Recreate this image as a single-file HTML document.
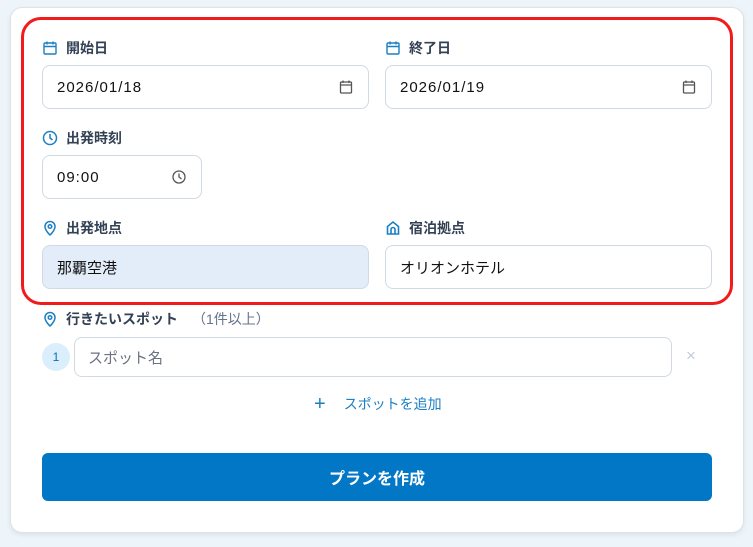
<!DOCTYPE html>
<html><head><meta charset="utf-8"><style>
*{box-sizing:border-box;margin:0;padding:0}
body{width:753px;height:547px;background:#eef5fa;font-family:"Liberation Sans","Noto Sans CJK JP",sans-serif;position:relative;overflow:hidden;color:#1f2937}
.card{position:absolute;left:10px;top:7px;width:734px;height:526px;background:#fff;border:1px solid #dbe3ea;border-radius:12px;box-shadow:0 2px 6px rgba(0,0,0,.08)}
.red{position:absolute;left:21px;top:17px;width:712px;height:288px;border:3.5px solid #f21b1b;border-radius:20px}
.lbl{position:absolute;font-size:14px;font-weight:bold;color:#334155;display:flex;align-items:center;gap:8px;height:20px}
.lbl svg{width:16px;height:16px}
.in{position:absolute;height:44px;border:1px solid #d1d9e2;border-radius:8px;background:#fff;font-size:15px;color:#111;display:flex;align-items:center;padding-left:14px}
.in .ic{position:absolute;right:14px;top:13px}
.ls{letter-spacing:1px}
.blue{background:#e3ecf9}
</style></head><body>
<div class="card"></div>
<div class="red"></div>

<div class="lbl" style="left:42px;top:38px"><svg viewBox="0 0 16 16" fill="none" stroke="#1b7fc4" stroke-width="1.4"><rect x="2" y="3" width="12" height="11" rx="1"/><path d="M2 6.5h12M5 1.5v3M11 1.5v3"/></svg>開始日</div>
<div class="in" style="left:42px;top:65px;width:327px"><span class="ls">2026/01/18</span><svg class="ic" width="16" height="16" viewBox="0 0 16 16" fill="none" stroke="#555" stroke-width="1.3"><rect x="2.5" y="3" width="11" height="11" rx="1"/><path d="M2.5 6h11M5 1.5v2.5M11 1.5v2.5"/></svg></div>

<div class="lbl" style="left:385px;top:38px"><svg viewBox="0 0 16 16" fill="none" stroke="#1b7fc4" stroke-width="1.4"><rect x="2" y="3" width="12" height="11" rx="1"/><path d="M2 6.5h12M5 1.5v3M11 1.5v3"/></svg>終了日</div>
<div class="in" style="left:385px;top:65px;width:327px"><span class="ls">2026/01/19</span><svg class="ic" width="16" height="16" viewBox="0 0 16 16" fill="none" stroke="#555" stroke-width="1.3"><rect x="2.5" y="3" width="11" height="11" rx="1"/><path d="M2.5 6h11M5 1.5v2.5M11 1.5v2.5"/></svg></div>

<div class="lbl" style="left:42px;top:128px"><svg viewBox="0 0 16 16" fill="none" stroke="#1b7fc4" stroke-width="1.5"><circle cx="8" cy="8" r="6.5"/><path d="M8 4v4l2.5 2"/></svg>出発時刻</div>
<div class="in" style="left:42px;top:155px;width:160px"><span class="ls">09:00</span><svg class="ic" width="16" height="16" viewBox="0 0 16 16" fill="none" stroke="#555" stroke-width="1.3"><circle cx="8" cy="8" r="6"/><path d="M8 4.5V8l2.5 2"/></svg></div>

<div class="lbl" style="left:42px;top:218px"><svg viewBox="0 0 16 16" fill="none" stroke="#1b7fc4" stroke-width="1.5"><path d="M8 15s5-4.5 5-8.5a5 5 0 0 0-10 0C3 10.5 8 15 8 15z"/><circle cx="8" cy="6.5" r="1.8"/></svg>出発地点</div>
<div class="in blue" style="left:42px;top:245px;width:327px">那覇空港</div>

<div class="lbl" style="left:385px;top:218px"><svg viewBox="0 0 16 16" fill="none" stroke="#1b7fc4" stroke-width="1.6"><path d="M2.5 14V6.5L8 2l5.5 4.5V14z"/><path d="M6 14V9.5a2 2 0 0 1 4 0V14"/></svg>宿泊拠点</div>
<div class="in" style="left:385px;top:245px;width:327px">オリオンホテル</div>

<div class="lbl" style="left:42px;top:309px"><svg viewBox="0 0 16 16" fill="none" stroke="#1b7fc4" stroke-width="1.5"><path d="M8 15s5-4.5 5-8.5a5 5 0 0 0-10 0C3 10.5 8 15 8 15z"/><circle cx="8" cy="6.5" r="1.8"/></svg>行きたいスポット<span style="font-weight:normal;color:#64748b;margin-left:6px">（1件以上）</span></div>

<div style="position:absolute;left:42px;top:343px;width:28px;height:28px;border-radius:50%;background:#dbeefb;color:#0b6db3;font-size:12px;display:flex;align-items:center;justify-content:center">1</div>
<div class="in" style="left:74px;top:337px;width:598px;height:40px;color:#6b7280;padding-left:13px">スポット名</div>
<div style="position:absolute;left:686px;top:346px;color:#c4cbd4;font-size:17px">×</div>

<div style="position:absolute;left:314px;top:394px;color:#1b7fc4;font-size:14px;display:flex;align-items:center"><span style="font-size:20px;margin-right:18px;line-height:20px">+</span>スポットを追加</div>

<div style="position:absolute;left:42px;top:453px;width:670px;height:48px;background:#0277c6;border-radius:6px;color:#fff;font-size:16px;font-weight:bold;display:flex;align-items:center;justify-content:center">プランを作成</div>
</body></html>
